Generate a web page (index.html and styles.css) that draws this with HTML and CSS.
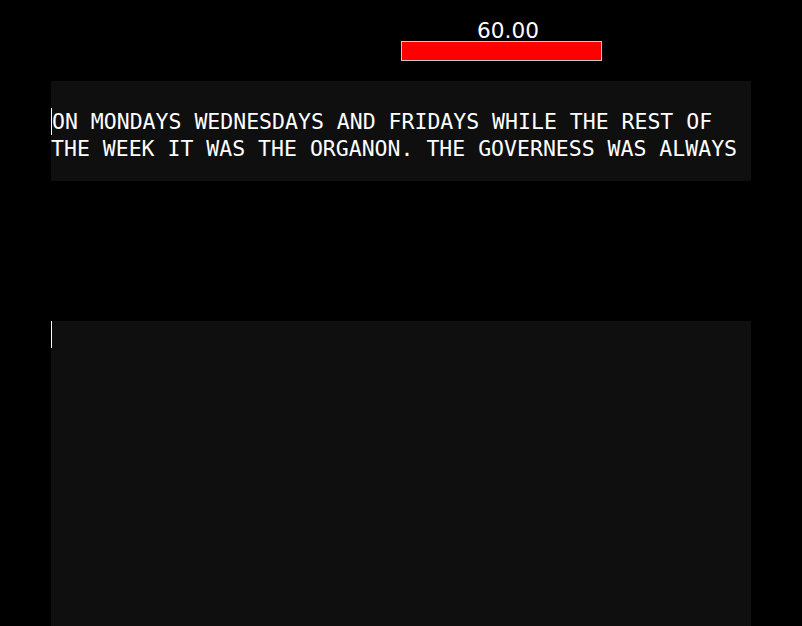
FILE: index.html
```html
<!DOCTYPE html>
<html lang="en">
<head>
  <meta charset="UTF-8">
  <meta name="viewport" content="width=device-width, initial-scale=1.0">
  <title>Typing Trainer</title>
  <link rel="stylesheet" href="styles.css">
</head>
<body>
  <!-- Timer -->
  <div class="hud">
    <div class="timer">60.00</div>
    <div class="bar"></div>
  </div>

  <!-- Prompt text -->
  <div class="panel prompt">
    <span class="cursor"></span>ON MONDAYS WEDNESDAYS AND FRIDAYS WHILE THE REST OF THE WEEK IT WAS THE ORGANON. THE GOVERNESS WAS ALWAYS
  </div>

  <!-- Typed input -->
  <div class="panel input"><span class="cursor"></span></div>
</body>
</html>
```

FILE: styles.css
```css
/* General Styling */
html, body {
  margin: 0;
  padding: 0;
  background: #000;
  overflow: hidden;
}

body {
  height: 626px;
  color: #fff;
  font-family: "DejaVu Sans Mono", monospace;
}

/* Timer */
.hud {
  margin-left: 50%;
  width: 201px;
}

.timer {
  padding: 21px 0 0 13px;
  line-height: 20px;
  height: 20px;
  text-align: center;
  font-family: "DejaVu Sans", sans-serif;
  font-size: 21.6px;
}

.bar {
  height: 18px;
  background: #f00;
  border: 1px solid #c8c8c8;
}

/* Panels */
.panel {
  width: 700px;
  margin: 0 51px;
  background: #0f0f0f;
  font-size: 21.5px;
  line-height: 27px;
  box-sizing: border-box;
}

.prompt {
  margin-top: 20px;
  height: 100px;
  padding-top: 27px;
}

.input {
  margin-top: 140px;
  height: 305px;
}

.cursor {
  display: inline-block;
  width: 0;
  height: 27px;
  border-left: 1px solid #fff;
  vertical-align: top;
}
```
